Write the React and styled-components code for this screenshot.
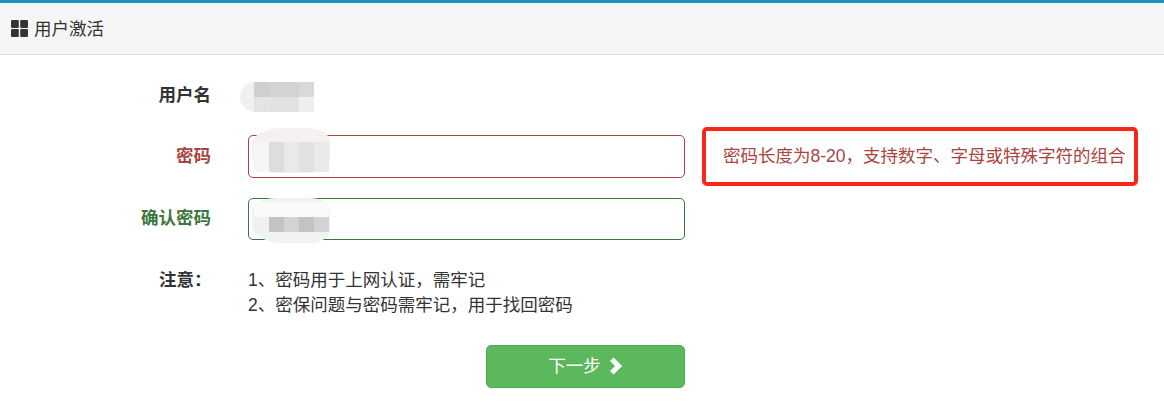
import React from 'react';
import styled, { createGlobalStyle } from 'styled-components';

const GlobalStyle = createGlobalStyle`
    html, body {
        margin: 0;
        background: #fff;
    }
    body {
        font-family: "Liberation Sans", "Noto Sans CJK SC", sans-serif;
        font-size: 17.5px;
        line-height: 25px;
        color: #333;
    }
`;

const App = () => (
    <>
        <GlobalStyle />
        <Panel>
            <Heading>
                <GridIcon />
                <HeadingText>用户激活</HeadingText>
            </Heading>
            <Form>
                <Row $height="40px">
                    <Label>用户名</Label>
                    <Control>
                        <Mosaic
                            $left="-8px"
                            $top="7px"
                            $width="74px"
                            $height="30px"
                            $blob="#f1f0ef"
                            $radius="15px 0 0 15px"
                        >
                            <Cells $columns={4} $inset="14px" $cell="15px">
                                {['#cfcfcf', '#d4d3d2', '#d4d3d2', '#d8d9d9', '#e4e4e4', '#e2e2e2', '#e2e2e2', '#eceef0'].map((c, i) => (
                                    <Cell key={i} $color={c} />
                                ))}
                            </Cells>
                        </Mosaic>
                    </Control>
                </Row>
                <Row $height="42.5px" $status="error">
                    <Label>密码</Label>
                    <Control>
                        <Input type="text" readOnly $status="error" />
                        <Mosaic
                            $left="4px"
                            $top="-7px"
                            $width="78px"
                            $height="45px"
                            $blob="#f6f1f1"
                            $radius="40% 30% 25% 30% / 35% 30% 30% 35%"
                        >
                            <Cells $columns={5} $inset="2px" $cell="30px" $pad="14px">
                                {['#f6f6f6', '#dcddde', '#e9e9e9', '#e0e1e2', '#e8e9e9'].map((c, i) => (
                                    <Cell key={i} $color={c} />
                                ))}
                            </Cells>
                        </Mosaic>
                    </Control>
                    <Hint>
                        密码长度为8-20，支持数字、字母或特殊字符的组合
                        <RedBox />
                    </Hint>
                </Row>
                <Row $height="42.5px" $status="success">
                    <Label>确认密码</Label>
                    <Control>
                        <Input type="text" readOnly $status="success" />
                        <Mosaic
                            $left="4px"
                            $top="0"
                            $width="78px"
                            $height="45px"
                            $blob="#eff3f2"
                            $radius="30% 25% 25% 40% / 30% 30% 30% 40%"
                        >
                            <Cells $columns={5} $inset="2px" $cell="15px" $pad="4px">
                                {['#f9fafa', '#f9fafa', '#f9fafa', '#f9fafa', '#f9fafa', '#f0f0f0', '#c3c3c3', '#d3d3d2', '#c3c3c3', '#d2d3d4'].map((c, i) => (
                                    <Cell key={i} $color={c} />
                                ))}
                            </Cells>
                        </Mosaic>
                    </Control>
                </Row>
                <NoteRow>
                    <NoteLabel>注意：</NoteLabel>
                    <Notes>
                        <li>1、密码用于上网认证，需牢记</li>
                        <li>2、密保问题与密码需牢记，用于找回密码</li>
                    </Notes>
                </NoteRow>
                <Actions>
                    <NextButton type="button">
                        下一步
                        <ChevronIcon />
                    </NextButton>
                </Actions>
            </Form>
        </Panel>
    </>
);

export default App;

const GridIcon = () => (
    <svg width="17" height="17" viewBox="0 0 17 17" fill="#333">
        <rect x="0" y="0" width="7.8" height="8" rx="1.2" />
        <rect x="9.2" y="0" width="7.8" height="8" rx="1.2" />
        <rect x="0" y="9" width="7.8" height="8" rx="1.2" />
        <rect x="9.2" y="9" width="7.8" height="8" rx="1.2" />
    </svg>
);

const ChevronIcon = () => (
    <svg width="14" height="18" viewBox="0 0 14 18" fill="#fff">
        <path d="M4.6 0.5 L13.2 9 L4.6 17.5 L1 14 L6 9 L1 4 Z" />
    </svg>
);

const colors = {
    error: '#a94442',
    success: '#3c763d',
};

const Panel = styled.div`
    border-top: 3px solid #1b94bb;
`;

const Heading = styled.div`
    display: flex;
    align-items: center;
    gap: 6px;
    height: 51px;
    padding-left: 11px;
    background: #f5f5f5;
    border-bottom: 1px solid #ddd;
    color: #333;
    line-height: 1;
`;

const HeadingText = styled.span`
    padding-top: 2px;
`;

const Form = styled.div`
    display: flex;
    flex-direction: column;
    gap: 20px;
    padding-top: 20px;
`;

const Row = styled.div`
    display: grid;
    grid-template-columns: 211px 437px 1fr;
    column-gap: 37px;
    align-items: center;
    height: ${(p) => p.$height};
    color: ${(p) => colors[p.$status] || '#333'};
`;

const Label = styled.label`
    font-weight: 700;
    text-align: right;
`;

const Control = styled.div`
    position: relative;
    height: 100%;
`;

const Input = styled.input`
    display: block;
    box-sizing: border-box;
    width: 100%;
    height: 100%;
    padding: 0 15px;
    border: 1px solid ${(p) => colors[p.$status]};
    border-radius: 5px;
    background: #fff;
    outline: none;
`;

// the blurred-out values lie on top of the fields
const Mosaic = styled.div`
    position: absolute;
    left: ${(p) => p.$left};
    top: ${(p) => p.$top};
    width: ${(p) => p.$width};
    height: ${(p) => p.$height};
    background: ${(p) => p.$blob};
    border-radius: ${(p) => p.$radius};
`;

const Cells = styled.div`
    display: grid;
    grid-template-columns: repeat(${(p) => p.$columns}, 15px);
    grid-auto-rows: ${(p) => p.$cell};
    margin-left: ${(p) => p.$inset};
    padding-top: ${(p) => p.$pad || 0};
`;

const Cell = styled.i`
    display: block;
    background: ${(p) => p.$color};
`;

const Hint = styled.div`
    position: relative;
    margin-left: 1px;
    white-space: nowrap;
`;

const RedBox = styled.div`
    position: absolute;
    left: -21px;
    right: 26px;
    top: -17px;
    height: 59px;
    box-sizing: border-box;
    border: 4px solid #ff2419;
    border-radius: 5px;
`;

const NoteRow = styled.div`
    display: grid;
    grid-template-columns: 89px 1fr;
    padding-left: 159px;
    margin-top: 8px;
`;

const NoteLabel = styled.div`
    font-weight: 700;
`;

const Notes = styled.ul`
    margin: 0;
    padding: 0;
    list-style: none;
`;

const Actions = styled.div`
    display: flex;
    justify-content: flex-end;
    width: 685px;
    margin-top: 7px;
`;

const NextButton = styled.button`
    display: flex;
    align-items: center;
    justify-content: center;
    gap: 8px;
    width: 199px;
    height: 42.5px;
    padding: 0;
    border: 1px solid #4cae4c;
    border-radius: 5px;
    background: #5cb85c;
    color: #fff;
    font: inherit;
`;
